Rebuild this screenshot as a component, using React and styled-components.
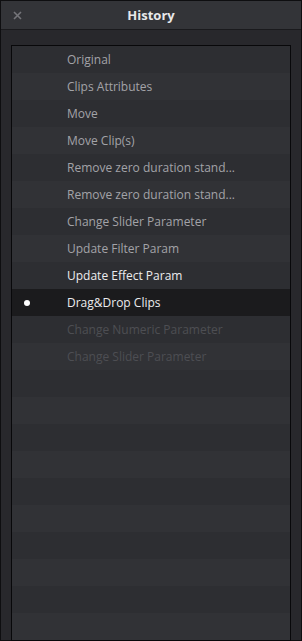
import React from "react";
import styled, { createGlobalStyle } from "styled-components";

const GlobalStyle = createGlobalStyle`
  html, body {
    margin: 0;
    padding: 0;
    background: #28282c;
  }
  body {
    font-family: "Open Sans", "Noto Sans", sans-serif;
  }
`;

const Window = styled.div`
  box-sizing: border-box;
  width: 302px;
  height: 641px;
  border: 1px solid #0e0e10;
  background: #28282c;
  display: flex;
  flex-direction: column;
`;

const TitleBar = styled.div`
  position: relative;
  height: 28px;
  flex-shrink: 0;
  background: #333438;
  border-bottom: 1px solid #1a1a1d;
  display: flex;
  align-items: center;
  justify-content: center;
`;

const Title = styled.div`
  color: #e8e8ea;
  font-size: 13px;
  font-weight: 700;
`;

const Close = styled.button`
  position: absolute;
  left: 10px;
  top: 8px;
  width: 12px;
  height: 12px;
  padding: 0;
  border: none;
  background: transparent;
  display: flex;
  align-items: center;
  justify-content: center;
`;

const Body = styled.div`
  flex: 1;
  padding: 15px 10px;
  display: flex;
`;

const Panel = styled.div`
  flex: 1;
  border: 1px solid #08080a;
  background: #303135;
  display: flex;
  flex-direction: column;
  overflow: hidden;
`;

const Row = styled.div`
  height: 27px;
  flex-shrink: 0;
  display: flex;
  align-items: center;
  background: ${({ $current, $odd }) =>
    $current ? "#1b1b1d" : $odd ? "#313236" : "#2d2e32"};
  color: ${({ $state }) =>
    $state === "bright" ? "#ececee" : $state === "undone" ? "#4d4e53" : "#a3a3a8"};
  font-size: 12px;
`;

const Marker = styled.div`
  width: 55px;
  display: flex;
  justify-content: center;
`;

const Dot = styled.span`
  width: 6px;
  height: 6px;
  border-radius: 50%;
  background: #ffffff;
  margin-left: -25px;
`;

const Label = styled.span`
  white-space: nowrap;
`;

const items = [
  { text: "Original" },
  { text: "Clips Attributes" },
  { text: "Move" },
  { text: "Move Clip(s)" },
  { text: "Remove zero duration stand..." },
  { text: "Remove zero duration stand..." },
  { text: "Change Slider Parameter" },
  { text: "Update Filter Param" },
  { text: "Update Effect Param", state: "bright" },
  { text: "Drag&Drop Clips", state: "bright", current: true },
  { text: "Change Numeric Parameter", state: "undone" },
  { text: "Change Slider Parameter", state: "undone" },
];

const TOTAL_ROWS = 22;

export default function App() {
  const rows = Array.from({ length: TOTAL_ROWS }, (_, i) => items[i] || { text: "" });
  return (
    <>
      <GlobalStyle />
      <Window>
        <TitleBar>
          <Close aria-label="Close">
            <svg width="9" height="9" viewBox="0 0 9 9">
              <path d="M1 1 L8 8 M8 1 L1 8" stroke="#75757a" strokeWidth="1.6" />
            </svg>
          </Close>
          <Title>History</Title>
        </TitleBar>
        <Body>
          <Panel>
            {rows.map((item, i) => (
              <Row key={i} $odd={i % 2 === 1} $current={item.current} $state={item.state}>
                <Marker>{item.current && <Dot />}</Marker>
                <Label>{item.text}</Label>
              </Row>
            ))}
          </Panel>
        </Body>
      </Window>
    </>
  );
}
